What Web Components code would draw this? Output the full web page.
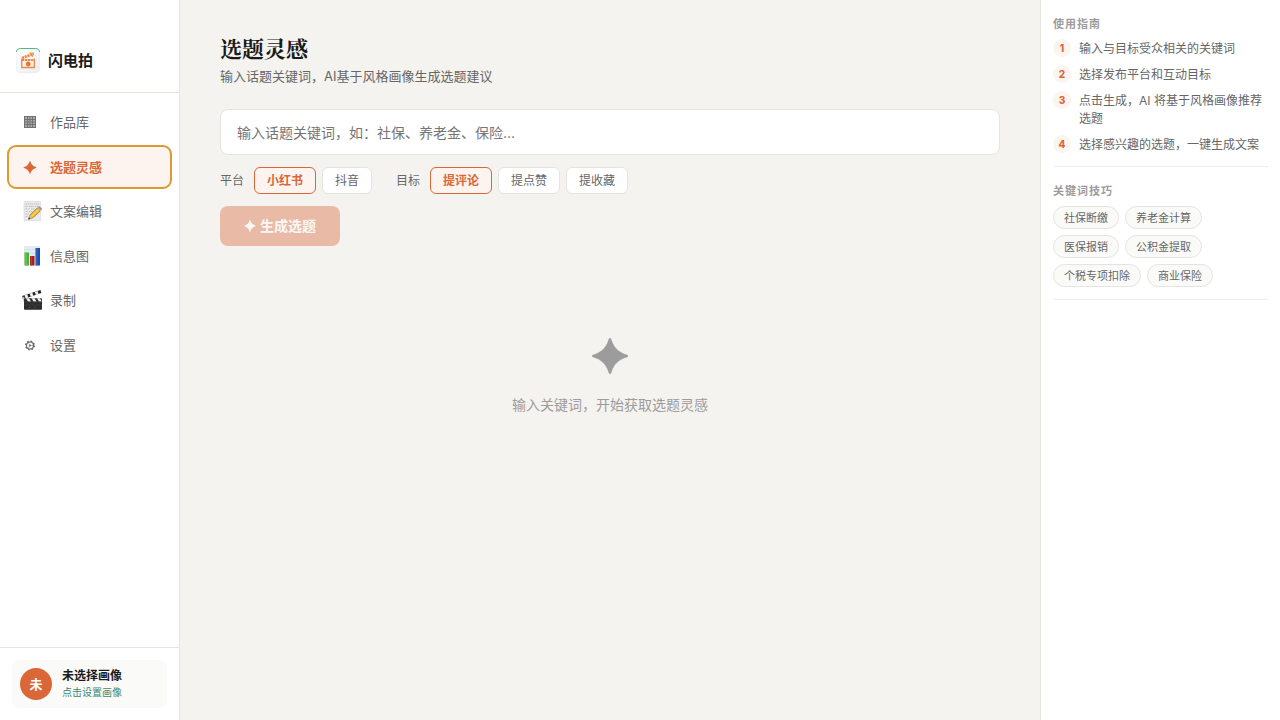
<!DOCTYPE html>
<html lang="zh-CN">
<head>
<meta charset="utf-8">
<meta name="viewport" content="width=device-width, initial-scale=1">
<title>闪电拍</title>
<style>
  :root {
    --color-bg: #f5f3ef;
    --color-surface: #ffffff;
    --color-soft: #fafaf8;
    --color-border: #e6e4df;
    --color-text: #1a1a1a;
    --color-muted: #666666;
    --color-faint: #9c9c9c;
    --color-accent: #d96738;
    --color-accent-soft: #fdf4ef;
    --color-focus: #dc9a30;
    --color-teal: #3a8877;
    --font-sans: Inter, "Noto Sans CJK SC", sans-serif;
    --font-serif: "Liberation Serif", "Noto Serif CJK SC", "Noto Sans CJK SC", serif;
  }

  body {
    margin: 0;
    font-family: var(--font-sans);
    font-size: 13px;
    line-height: 20px;
    color: var(--color-text);
    background: var(--color-bg);
  }
</style>
</head>
<body>
<app-shell>
  <app-sidebar slot="sidebar">
    <nav-item icon="grid" href="#works">作品库</nav-item>
    <nav-item icon="star" href="#topics" active>选题灵感</nav-item>
    <nav-item icon="memo" href="#editor">文案编辑</nav-item>
    <nav-item icon="chart" href="#charts">信息图</nav-item>
    <nav-item icon="clapper" href="#record">录制</nav-item>
    <nav-item icon="gear" href="#settings">设置</nav-item>
    <profile-card slot="footer" initial="未">
      未选择画像
      <span slot="hint">点击设置画像</span>
    </profile-card>
  </app-sidebar>

  <topic-page></topic-page>

  <aside-section slot="aside" heading="使用指南">
    <guide-step number="1">输入与目标受众相关的关键词</guide-step>
    <guide-step number="2">选择发布平台和互动目标</guide-step>
    <guide-step number="3">点击生成，AI 将基于风格画像推荐选题</guide-step>
    <guide-step number="4">选择感兴趣的选题，一键生成文案</guide-step>
  </aside-section>
  <aside-section slot="aside" heading="关键词技巧" wrap>
    <keyword-chip>社保断缴</keyword-chip>
    <keyword-chip>养老金计算</keyword-chip>
    <keyword-chip>医保报销</keyword-chip>
    <keyword-chip>公积金提取</keyword-chip>
    <keyword-chip>个税专项扣除</keyword-chip>
    <keyword-chip>商业保险</keyword-chip>
  </aside-section>
</app-shell>

<script>
const STAR = "M12 0C12.500 0 12.800 1 13.200 2.200C14.800 6.500 17.500 9.200 21.800 10.800C23 11.200 24 11.500 24 12C24 12.500 23 12.800 21.800 13.200C17.500 14.800 14.800 17.500 13.200 21.800C12.800 23 12.500 24 12 24C11.500 24 11.200 23 10.800 21.800C9.200 17.500 6.500 14.800 2.200 13.200C1 12.800 0 12.500 0 12C0 11.500 1 11.200 2.200 10.800C6.500 9.200 9.200 6.500 10.800 2.200C11.200 1 11.500 0 12 0Z";

// nav icons share a 24x24 box, small glyphs are centred on x=10
const ICONS = {
  grid: `
    <rect x="4" y="6" width="12" height="12" fill="#a8a8a8"/>
    <path d="M4.500 6V18M7.500 6V18M10 6V18M12.500 6V18M15.500 6V18M4 6.500H16M4 9.500H16M4 12H16M4 14.500H16M4 17.500H16" stroke="#6a6a6a" stroke-width="0.800"/>`,
  star: `<path transform="translate(3.500 6) scale(0.540)" d="${STAR}" fill="currentColor"/>`,
  memo: `
    <g transform="translate(0 1)">
    <path d="M4 1.500H20.500V20.800H4Z" fill="#e9e9e9" stroke="#d2d2d2" stroke-width="0.500"/>
    <path d="M5.500 4H9M10 4H13M14 4H19M5.500 6.500H8M9 6.500H14M15 6.500H18.500M5.500 9H10M11 9H15M5.500 11.500H8M9 11.500H12M5.500 14H9M5.500 16.500H8" stroke="#b8b8b8" stroke-width="0.800" stroke-dasharray="1.500 0.500"/>
    <path d="M8.600 19.200L10 14.800L17.300 7.900L20.300 11L12.900 17.800Z" fill="#f0bd34" stroke="#7d6422" stroke-width="0.600"/>
    <path d="M11.700 16.400L18.700 9.600" stroke="#fadd76" stroke-width="1"/>
    <path d="M8.400 19.400L10 14.900L12.800 17.800Z" fill="#d9b98c"/>
    <path d="M8.200 19.600L9 17.300L10.500 18.800Z" fill="#333"/>
    <path d="M17.300 7.900L18.500 6.800L21.500 9.900L20.300 11Z" fill="#a9b3b8"/>
    <path d="M18.500 6.800C19.500 6 22.300 8.700 21.500 9.900Z" fill="#e8766d" stroke="#c95a55" stroke-width="0.500"/>
    </g>`,
  chart: `
    <rect x="4" y="2" width="16" height="19.500" fill="#e2ebf2"/>
    <path d="M4 5.500H20M4 9.500H20M4 13.500H20M4 17.500H20" stroke="#cad8e3" stroke-width="0.500"/>
    <rect x="4.500" y="8.500" width="4.500" height="13" fill="#4cb03c"/>
    <rect x="5.300" y="8.500" width="1.300" height="13" fill="#6cc857"/>
    <rect x="10" y="12" width="4.500" height="9.500" fill="#a41f22"/>
    <rect x="10.800" y="12" width="1.300" height="9.500" fill="#b93a38"/>
    <rect x="15.500" y="4" width="4.500" height="17.500" fill="#1b4cae"/>
    <rect x="16.300" y="4" width="1.300" height="17.500" fill="#3265c6"/>`,
  clapper: `
    <g transform="translate(0 0.500)">
    <path d="M2 7.500L20.500 1.500L21.300 4.600L3 10.800Z" fill="#222"/>
    <path d="M4.500 6.700L7.300 5.800L8.200 9L5.600 9.900ZM9.600 5L12.300 4.200L13.400 7.300L10.700 8.200ZM14.800 3.400L17.500 2.500L18.600 5.500L15.900 6.400Z" fill="#f1f1f1"/>
    <path d="M2.200 7.500L5.500 10V13.500H3.800Z" fill="#c8c8c8"/>
    <rect x="4" y="9.700" width="18" height="11.500" rx="0.800" fill="#2d2d2f"/>
    <path d="M6 9.700H9L11 13H8ZM11.500 9.700H14.500L16.500 13H13.500ZM17 9.700H20L21.800 13H19Z" fill="#efefef"/>
    <path d="M4 13.500H22M4 16.500H22" stroke="#484848" stroke-width="0.500"/>
    <circle cx="9.500" cy="19" r="0.400" fill="#999"/><circle cx="15" cy="19" r="0.400" fill="#999"/>
    </g>`,
  gear: `
    <circle cx="10" cy="12.500" r="3.500" fill="none" stroke="currentColor" stroke-width="1.200"/>
    <circle cx="10" cy="12.500" r="4.400" fill="none" stroke="currentColor" stroke-width="1.200" stroke-dasharray="1.700 1.756"/>
    <circle cx="10" cy="12.500" r="1" fill="currentColor"/>
    <path d="M10 12.500H13.500M10 12.500L8.200 9.500M10 12.500L8.200 15.500" stroke="currentColor" stroke-width="0.500"/>`
};

class AppShell extends HTMLElement {
  constructor() {
    super();
    this.attachShadow({ mode: "open" }).innerHTML = `
      <style>
        :host {
          display: grid;
          grid-template-columns: 180px minmax(0, 1fr) 240px;
          min-height: 100vh;
        }
        main {
          padding: 36px 40px;
        }
        aside {
          background: var(--color-surface);
          border-left: 1px solid var(--color-border);
          padding: 0 12px;
        }
      </style>
      <slot name="sidebar"></slot>
      <main><slot></slot></main>
      <aside><slot name="aside"></slot></aside>
    `;
  }
}

class AppSidebar extends HTMLElement {
  constructor() {
    super();
    this.attachShadow({ mode: "open" }).innerHTML = `
      <style>
        :host {
          display: flex;
          flex-direction: column;
          background: var(--color-surface);
          border-right: 1px solid var(--color-border);
        }
        header {
          display: flex;
          align-items: center;
          gap: 8px;
          padding: 48px 16px 18px;
          border-bottom: 1px solid var(--color-border);
          font-size: 15px;
          line-height: 26px;
          font-weight: 700;
        }
        header svg {
          width: 24px;
          height: 26px;
        }
        nav {
          flex: 1;
          padding: 8px;
        }
        .items {
          display: grid;
          grid-auto-rows: 1fr;
          gap: 2px;
          min-height: 265px;
        }
        footer {
          padding: 12px;
          border-top: 1px solid var(--color-border);
        }
      </style>
      <header>
        <svg viewBox="0 0 24 26" aria-hidden="true">
          <defs>
            <linearGradient id="tile" x1="0" y1="0" x2="1" y2="1">
              <stop offset="0" stop-color="#fff"/>
              <stop offset="1" stop-color="#e9edf7"/>
            </linearGradient>
          </defs>
          <rect x="0.300" y="0.300" width="23.400" height="24.400" rx="4.500" fill="url(#tile)" stroke="#e8e5e6" stroke-width="0.500"/>
          <path d="M0.300 4C0.500 2 2 0.500 4.500 0.500H19.500C22 0.500 23.500 2 23.700 4" fill="none" stroke="#55b878" stroke-width="1"/>
          <g fill="none" stroke="#f58538">
            <path d="M5.700 10.500V19.500H18.300V10.500" stroke-width="1.300"/>
            <path d="M6 10L17.300 6" stroke-width="2.600" stroke-dasharray="2.200 0.700"/>
            <path d="M6 12H18" stroke-width="2" stroke-dasharray="2.200 0.700"/>
            <path d="M13.500 5L17.800 5.200L16 9" stroke-width="1"/>
          </g>
          <circle cx="12.200" cy="16" r="2.400" fill="#f27427"/>
        </svg>
        <span>闪电拍</span>
      </header>
      <nav><div class="items"><slot></slot></div></nav>
      <footer><slot name="footer"></slot></footer>
    `;
  }
}

class NavItem extends HTMLElement {
  connectedCallback() {
    const current = this.hasAttribute("active") ? `aria-current="page"` : "";
    this.attachShadow({ mode: "open" }).innerHTML = `
      <style>
        :host {
          display: grid;
        }
        a {
          display: flex;
          align-items: center;
          gap: 6px;
          padding: 0 12px;
          border-radius: 8px;
          color: var(--color-muted);
          font-size: 13px;
          font-weight: 400;
          text-decoration: none;
        }
        a[aria-current] {
          color: var(--color-accent);
          background: var(--color-accent-soft);
          font-weight: 700;
          outline: 2px solid var(--color-focus);
          outline-offset: -1px;
        }
        svg {
          width: 24px;
          height: 24px;
          flex: none;
        }
      </style>
      <a href="${this.getAttribute("href")}" ${current}>
        <svg viewBox="0 0 24 24" aria-hidden="true">${ICONS[this.getAttribute("icon")]}</svg>
        <slot></slot>
      </a>
    `;
  }
}

class ProfileCard extends HTMLElement {
  connectedCallback() {
    this.attachShadow({ mode: "open" }).innerHTML = `
      <style>
        :host {
          display: block;
        }
        button {
          display: flex;
          align-items: center;
          gap: 10px;
          width: 100%;
          padding: 8px;
          border: 0;
          border-radius: 8px;
          background: var(--color-soft);
          color: var(--color-text);
          font: inherit;
          text-align: left;
        }
        .avatar {
          display: grid;
          place-items: center;
          width: 32px;
          height: 32px;
          border-radius: 50%;
          background: var(--color-accent);
          color: #fff;
          font-weight: 700;
        }
        .name, .hint {
          display: block;
          font-size: 12px;
          line-height: 16px;
          font-weight: 700;
        }
        .hint {
          color: var(--color-teal);
          font-size: 10px;
          font-weight: 400;
        }
      </style>
      <button type="button">
        <span class="avatar">${this.getAttribute("initial")}</span>
        <span>
          <span class="name"><slot></slot></span>
          <span class="hint"><slot name="hint"></slot></span>
        </span>
      </button>
    `;
  }
}

class ChoiceGroup extends HTMLElement {
  connectedCallback() {
    const options = this.getAttribute("options").split(",");
    this.attachShadow({ mode: "open" }).innerHTML = `
      <style>
        :host {
          display: block;
        }
        .group {
          display: flex;
          align-items: center;
          gap: 6px;
          font-size: 12px;
          line-height: 17px;
        }
        .label {
          color: var(--color-muted);
          margin-right: 4px;
        }
        button {
          padding: 4px 12px;
          border: 1px solid var(--color-border);
          border-radius: 6px;
          background: var(--color-surface);
          color: var(--color-muted);
          font: inherit;
        }
        button[aria-pressed="true"] {
          border-color: var(--color-accent);
          background: var(--color-accent-soft);
          color: var(--color-accent);
          font-weight: 700;
        }
      </style>
      <div class="group" role="group" aria-labelledby="label">
        <span class="label" id="label">${this.getAttribute("label")}</span>
        ${options.map((option, i) => `<button type="button" aria-pressed="${i === 0}">${option}</button>`).join("")}
      </div>
    `;
    this.shadowRoot.addEventListener("click", (e) => {
      const picked = e.target.closest("button");
      if (!picked) return;
      this.shadowRoot.querySelectorAll("button").forEach((button) => {
        button.setAttribute("aria-pressed", button === picked);
      });
    });
  }
}

class EmptyState extends HTMLElement {
  constructor() {
    super();
    this.attachShadow({ mode: "open" }).innerHTML = `
      <style>
        :host {
          display: flex;
          flex-direction: column;
          align-items: center;
          gap: 20px;
          padding: 92px 20px 60px;
          color: var(--color-faint);
          font-size: 14px;
          line-height: 22px;
        }
        svg {
          width: 36px;
          height: 36px;
        }
      </style>
      <svg viewBox="0 0 24 24" aria-hidden="true"><path d="${STAR}" fill="currentColor" stroke="currentColor" stroke-width="0.300"/></svg>
      <slot></slot>
    `;
  }
}

class TopicPage extends HTMLElement {
  constructor() {
    super();
    this.attachShadow({ mode: "open" }).innerHTML = `
      <style>
        :host {
          display: block;
        }
        h1 {
          margin: 0;
          font-family: var(--font-serif);
          font-size: 22px;
          line-height: 28px;
          font-weight: 700;
        }
        p {
          margin: 2px 0 0;
          color: var(--color-muted);
          font-size: 13px;
          line-height: 20px;
        }
        form {
          display: grid;
          gap: 12px;
          margin-top: 23px;
          justify-items: start;
        }
        input {
          box-sizing: border-box;
          width: 100%;
          height: 46px;
          padding: 0 16px;
          border: 1px solid var(--color-border);
          border-radius: 8px;
          background: var(--color-surface);
          color: var(--color-text);
          font: inherit;
          font-size: 14px;
        }
        input::placeholder {
          color: #757575;
        }
        .filters {
          display: flex;
          flex-wrap: wrap;
          gap: 12px 24px;
        }
        .submit {
          display: flex;
          align-items: center;
          gap: 4px;
          height: 40px;
          padding: 0 24px;
          border: 0;
          border-radius: 8px;
          background: var(--color-accent);
          color: #fff;
          font: inherit;
          font-size: 14px;
          font-weight: 700;
        }
        .submit:disabled {
          opacity: 0.4;
        }
        .submit svg {
          width: 12px;
          height: 12px;
        }
      </style>
      <h1>选题灵感</h1>
      <p>输入话题关键词，AI基于风格画像生成选题建议</p>
      <form>
        <input type="text" aria-label="话题关键词" placeholder="输入话题关键词，如：社保、养老金、保险...">
        <div class="filters">
          <choice-group label="平台" options="小红书,抖音"></choice-group>
          <choice-group label="目标" options="提评论,提点赞,提收藏"></choice-group>
        </div>
        <button class="submit" type="submit" disabled>
          <svg viewBox="0 0 24 24" aria-hidden="true"><path d="${STAR}" fill="currentColor"/></svg>
          生成选题
        </button>
      </form>
      <empty-state>输入关键词，开始获取选题灵感</empty-state>
    `;
    const input = this.shadowRoot.querySelector("input");
    const submit = this.shadowRoot.querySelector(".submit");
    input.addEventListener("input", () => {
      submit.disabled = !input.value.trim();
    });
    this.shadowRoot.querySelector("form").addEventListener("submit", (e) => e.preventDefault());
  }
}

class AsideSection extends HTMLElement {
  connectedCallback() {
    this.attachShadow({ mode: "open" }).innerHTML = `
      <style>
        :host {
          display: block;
          padding: 17px 0 12px;
          border-bottom: 1px solid #efeeeb;
        }
        h2 {
          margin: 0 0 7px;
          color: var(--color-faint);
          font-size: 11px;
          line-height: 15px;
          font-weight: 700;
          letter-spacing: 1px;
        }
        .content {
          display: flex;
          flex-direction: column;
          gap: 7px;
        }
        :host([wrap]) .content {
          flex-flow: row wrap;
          gap: 6px;
        }
      </style>
      <h2>${this.getAttribute("heading")}</h2>
      <div class="content"><slot></slot></div>
    `;
  }
}

class GuideStep extends HTMLElement {
  connectedCallback() {
    this.attachShadow({ mode: "open" }).innerHTML = `
      <style>
        :host {
          display: flex;
          align-items: flex-start;
          gap: 8px;
          color: var(--color-muted);
          font-size: 12px;
          line-height: 18px;
        }
        .number {
          flex: none;
          width: 18px;
          height: 18px;
          border-radius: 50%;
          background: var(--color-accent-soft);
          color: var(--color-accent);
          font-size: 10px;
          font-weight: 800;
          text-align: center;
        }
        .text {
          padding-top: 1px;
        }
      </style>
      <span class="number">${this.getAttribute("number")}</span>
      <span class="text"><slot></slot></span>
    `;
  }
}

class KeywordChip extends HTMLElement {
  constructor() {
    super();
    this.attachShadow({ mode: "open" }).innerHTML = `
      <style>
        :host {
          display: block;
        }
        button {
          display: block;
          padding: 4px 10px 2px;
          border: 1px solid var(--color-border);
          border-radius: 12px;
          background: var(--color-soft);
          color: var(--color-muted);
          font: inherit;
          font-size: 11px;
          line-height: 15px;
        }
      </style>
      <button type="button"><slot></slot></button>
    `;
  }
}

customElements.define("app-shell", AppShell);
customElements.define("app-sidebar", AppSidebar);
customElements.define("nav-item", NavItem);
customElements.define("profile-card", ProfileCard);
customElements.define("choice-group", ChoiceGroup);
customElements.define("empty-state", EmptyState);
customElements.define("topic-page", TopicPage);
customElements.define("aside-section", AsideSection);
customElements.define("guide-step", GuideStep);
customElements.define("keyword-chip", KeywordChip);
</script>
</body>
</html>
